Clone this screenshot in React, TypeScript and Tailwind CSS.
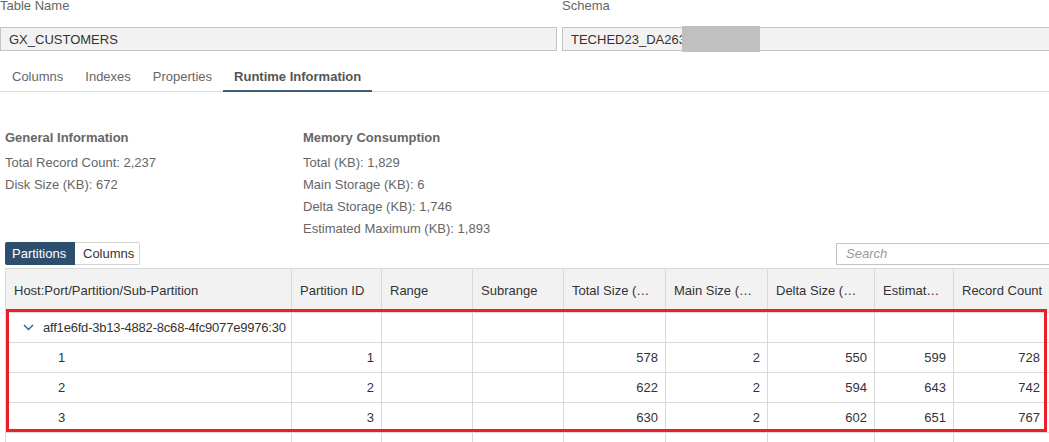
import { ReactNode } from 'react';

const cols = 'grid grid-cols-[286px_90px_91px_91px_102px_102px_107px_79px_98px]';

const headers = [
  'Host:Port/Partition/Sub-Partition',
  'Partition ID',
  'Range',
  'Subrange',
  'Total Size (…',
  'Main Size (…',
  'Delta Size (…',
  'Estimat…',
  'Record Count',
];

const rows = [
  ['1', '1', '', '', '578', '2', '550', '599', '728'],
  ['2', '2', '', '', '622', '2', '594', '643', '742'],
  ['3', '3', '', '', '630', '2', '602', '651', '767'],
];

function Cell({ children, right, last }: { children?: ReactNode; right?: boolean; last?: boolean }) {
  return (
    <div
      className={
        'flex items-center border-r border-[#d9d9d9] px-2 whitespace-nowrap overflow-hidden ' +
        (right ? 'justify-end ' : '') +
        (right && last ? 'pr-[11px]' : right ? 'pr-[7px]' : '')
      }
    >
      {children}
    </div>
  );
}

export default function App() {
  return (
    <div className="relative w-[1049px] h-[442px] overflow-hidden bg-white font-['Liberation_Sans',Arial,sans-serif] text-[13px] text-[#333]">
      <div className="w-[1060px]">
        {/* name / schema */}
        <div className="flex gap-[5px] -mt-[2px]">
          <div className="w-[557px] shrink-0">
            <div className="leading-4 text-[#666]">Table Name</div>
            <div className="mt-[13px] h-[24px] border border-[#c4c4c4] bg-[#f2f2f2] px-2 leading-[23px]">
              GX_CUSTOMERS
            </div>
          </div>
          <div className="flex-1">
            <div className="leading-4 text-[#666]">Schema</div>
            <div className="relative mt-[13px] h-[24px] border border-[#c4c4c4] bg-[#f2f2f2] px-2 leading-[23px]">
              TECHED23_DA263
              <div className="absolute left-[119px] top-[-2px] h-[26px] w-[78px] bg-[#c0c0c0]" />
            </div>
          </div>
        </div>

        {/* tabs */}
        <div className="mt-[8px] flex border-b border-[#dcdcdc] pl-px text-[#666]">
          {['Columns', 'Indexes', 'Properties'].map((t) => (
            <div key={t} className="-mb-px flex h-[33px] items-center border-b-2 border-transparent px-[11px] pt-[5px]">
              {t}
            </div>
          ))}
          <div className="-mb-px flex h-[33px] items-center border-b-2 border-[#3f5e7e] px-[11px] pt-[5px] font-bold text-[#555]">
            Runtime Information
          </div>
        </div>

        {/* info */}
        <div className="mt-[38px] flex pl-[5px] text-[#666]">
          <div className="w-[298px]">
            <div className="leading-4 font-bold">General Information</div>
            <div className="mt-[6px] leading-[22px]">
              <div>Total Record Count: 2,237</div>
              <div>Disk Size (KB): 672</div>
            </div>
          </div>
          <div>
            <div className="leading-4 font-bold">Memory Consumption</div>
            <div className="mt-[6px] leading-[22px]">
              <div>Total (KB): 1,829</div>
              <div>Main Storage (KB): 6</div>
              <div>Delta Storage (KB): 1,746</div>
              <div>Estimated Maximum (KB): 1,893</div>
            </div>
          </div>
        </div>

        {/* toolbar */}
        <div className="mt-[2px] flex items-center pl-[5px]">
          <div className="flex h-[23px]">
            <div className="flex w-[70px] items-center rounded-l-[2px] bg-[#2e4e6d] pl-[7px] text-white">Partitions</div>
            <div className="flex w-[65px] items-center rounded-r-[2px] border border-l-0 border-[#d4d4d4] pl-[8px]">
              Columns
            </div>
          </div>
          <div className="ml-auto flex h-[22px] w-[224px] items-center border border-[#c4c4c4] pl-[9px] italic text-[#999]">
            Search
          </div>
        </div>

        {/* table */}
        <div className="mt-[3px] ml-[5px] border-l border-t border-[#d9d9d9]">
          <div className={cols + ' h-[44px] border-b border-[#d9d9d9] bg-[#f2f2f2]'}>
            {headers.map((h) => (
              <Cell key={h}>{h}</Cell>
            ))}
          </div>
          <div className={cols + ' h-[30px] border-b border-[#d9d9d9]'}>
            <div className="flex items-center overflow-hidden border-r border-[#d9d9d9] pl-[17px] whitespace-nowrap tracking-[-0.2px]">
              <svg width="11" height="7" viewBox="0 0 11 7" className="mr-[9px] shrink-0">
                <polyline points="1,1 5.5,5.5 10,1" fill="none" stroke="#2f5f8f" strokeWidth="1.4" />
              </svg>
              aff1e6fd-3b13-4882-8c68-4fc9077e9976:30
            </div>
            {headers.slice(1).map((h) => (
              <Cell key={h} />
            ))}
          </div>
          {rows.map((r) => (
            <div key={r[0]} className={cols + ' h-[30px] border-b border-[#d9d9d9]'}>
              <div className="flex items-center border-r border-[#d9d9d9] pl-[52px]">{r[0]}</div>
              {r.slice(1).map((v, i) => (
                <Cell key={i} right last={i === 7}>
                  {v}
                </Cell>
              ))}
            </div>
          ))}
          <div className={cols + ' h-[30px]'}>
            {headers.map((h) => (
              <Cell key={h} />
            ))}
          </div>
        </div>
      </div>

      {/* highlight */}
      <div className="absolute left-[6px] top-[309px] h-[123px] w-[1041px] border-[3px] border-[#e8202a]" />
    </div>
  );
}
